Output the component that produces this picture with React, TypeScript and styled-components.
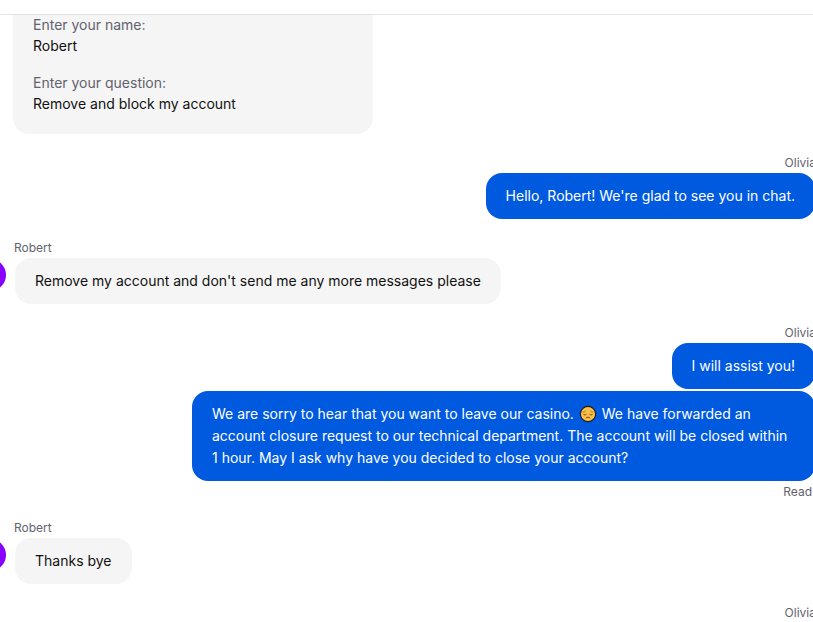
import React from "react";
import styled, { createGlobalStyle } from "styled-components";

const GlobalStyle = createGlobalStyle`
  *, *::before, *::after { box-sizing: border-box; }
  body {
    margin: 0;
    background: #ffffff;
    color: #111111;
    font-family: Inter, "Liberation Sans", sans-serif;
    font-size: 14px;
    line-height: 22px;
  }
`;

const Page = styled.div`
  display: flex;
  flex-direction: column;
  height: 100vh;
  overflow: hidden;
`;

const TopBar = styled.header`
  flex: none;
  height: 15px;
  border-bottom: 1px solid #e3e3e5;
`;

const Feed = styled.main`
  flex: 1;
  min-height: 0;
  overflow: hidden;
  display: flex;
  flex-direction: column;
  gap: 20px;
`;

const FormCard = styled.dl`
  flex: none;
  display: flex;
  flex-direction: column;
  gap: 16px;
  width: 360px;
  max-width: 100%;
  margin: -21px 0 0 13px;
  padding: 20px;
  border-radius: 16px;
  background: #f5f5f5;
  line-height: 21px;
`;

const Question = styled.dt`
  color: #62626d;
`;

const Answer = styled.dd`
  margin: 0;
`;

const Group = styled.section<{ $own?: boolean }>`
  flex: none;
  display: flex;
  flex-direction: column;
  align-items: ${(p) => (p.$own ? "flex-end" : "flex-start")};
  margin-right: ${(p) => (p.$own ? "-2px" : "0")};
`;

const Author = styled.div<{ $own?: boolean }>`
  margin: ${(p) => (p.$own ? "1px -1px 2px 0" : "1px 0 2px 14px")};
  font-size: 12px;
  line-height: 16px;
  color: #62626d;
`;

const Status = styled.div`
  margin: 3px 3px -1px 0;
  font-size: 12px;
  line-height: 16px;
  color: #62626d;
`;

const Row = styled.div`
  display: flex;
  align-items: flex-start;
  gap: 9px;
  margin-left: -26px;
`;

const Avatar = styled.div`
  flex: none;
  width: 32px;
  height: 32px;
  margin-top: 1px;
  border-radius: 50%;
  background: #8800ff;
`;

const Bubble = styled.p<{ $own?: boolean }>`
  max-width: 623px;
  margin: 0;
  padding: 12px 20px;
  border-radius: 16px;
  background: ${(p) => (p.$own ? "#005ae0" : "#f5f5f5")};
  color: ${(p) => (p.$own ? "#ffffff" : "#111111")};

  & + & {
    margin-top: 2px;
  }
`;

const Emoji = styled.svg`
  width: 18px;
  height: 18px;
  margin: 0 1px;
  vertical-align: -4px;
`;

function PensiveFace() {
  return (
    <Emoji viewBox="0 0 18 18" role="img" aria-label="Pensive face">
      <circle cx="9" cy="9" r="7.6" fill="#ffc04a" stroke="#1c1a19" strokeWidth="1.1" />
      <g fill="none" stroke="#5a3c14" strokeWidth="0.9" strokeLinecap="round">
        <path d="M4.4 9.2c.7 1 2 1 2.8.2" />
        <path d="M13.6 9.2c-.7 1-2 1-2.8.2" />
        <path d="M4.2 7.2c.9 0 1.7-.4 2.2-1" strokeWidth="0.6" />
        <path d="M13.8 7.2c-.9 0-1.7-.4-2.2-1" strokeWidth="0.6" />
        <path d="M7 12.9c1-1 3-1 4 0" />
      </g>
    </Emoji>
  );
}

function Incoming({ text }: { text: string }) {
  return (
    <Group>
      <Author>Robert</Author>
      <Row>
        <Avatar />
        <Bubble>{text}</Bubble>
      </Row>
    </Group>
  );
}

function Outgoing({ children }: { children?: React.ReactNode }) {
  return (
    <Group $own>
      <Author $own>Olivia</Author>
      {children}
    </Group>
  );
}

const answers = [
  { question: "Enter your name:", answer: "Robert" },
  { question: "Enter your question:", answer: "Remove and block my account" },
];

export default function App() {
  return (
    <Page>
      <GlobalStyle />
      <TopBar />
      <Feed>
        <FormCard>
          {answers.map(({ question, answer }) => (
            <div key={question}>
              <Question>{question}</Question>
              <Answer>{answer}</Answer>
            </div>
          ))}
        </FormCard>
        <Outgoing>
          <Bubble $own>Hello, Robert! We're glad to see you in chat.</Bubble>
        </Outgoing>
        <Incoming text="Remove my account and don't send me any more messages please" />
        <Outgoing>
          <Bubble $own>I will assist you!</Bubble>
          <Bubble $own>
            We are sorry to hear that you want to leave our casino. <PensiveFace /> We have
            forwarded an account closure request to our technical department. The account will be
            closed within 1 hour. May I ask why have you decided to close your account?
          </Bubble>
          <Status>Read</Status>
        </Outgoing>
        <Incoming text="Thanks bye" />
        <Outgoing />
      </Feed>
    </Page>
  );
}
